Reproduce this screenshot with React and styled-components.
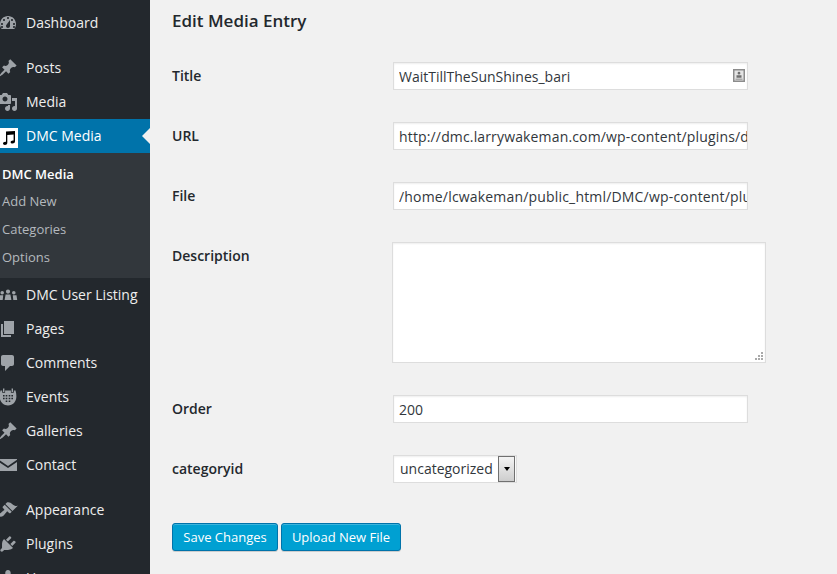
import React from 'react';
import styled, { createGlobalStyle } from 'styled-components';

const GlobalStyle = createGlobalStyle`
    html, body {
        margin: 0;
        padding: 0;
        height: 100%;
        overflow: hidden;
        background: #f1f1f1;
        font-family: "Open Sans", "Liberation Sans", sans-serif;
    }
`;

const ICONS = {
    dashboard: 'M3.76 16h12.48c1.1-1.37 1.76-3.11 1.76-5 0-4.42-3.58-8-8-8s-8 3.58-8 8c0 1.89.66 3.63 1.76 5zM10 4c.55 0 1 .45 1 1s-.45 1-1 1-1-.45-1-1 .45-1 1-1zM6 6c.55 0 1 .45 1 1s-.45 1-1 1-1-.45-1-1 .45-1 1-1zm8 0c.55 0 1 .45 1 1s-.45 1-1 1-1-.45-1-1 .45-1 1-1zm-5.37 5.55L12 7v6c0 1.1-.9 2-2 2s-2-.9-2-2c0-.57.24-1.08.63-1.45zM4 10c.55 0 1 .45 1 1s-.45 1-1 1-1-.45-1-1 .45-1 1-1zm12 0c.55 0 1 .45 1 1s-.45 1-1 1-1-.45-1-1 .45-1 1-1zm-12 3c.55 0 1 .45 1 1s-.45 1-1 1-1-.45-1-1 .45-1 1-1zm12 0c.55 0 1 .45 1 1s-.45 1-1 1-1-.45-1-1 .45-1 1-1z',
    pin: 'M10.44 3.02l1.82-1.82 6.36 6.35-1.83 1.82c-1.05-.68-2.48-.57-3.41.36l-.75.75c-.92.93-1.04 2.35-.35 3.41l-1.83 1.82-2.41-2.41-2.8 2.79c-.42.42-3.38 2.71-3.8 2.29s1.86-3.39 2.28-3.81l2.79-2.79L4.1 9.36l1.83-1.82c1.05.69 2.48.57 3.4-.36l.75-.75c.93-.92 1.05-2.35.36-3.41z',
    media: 'M13 11V4c0-.55-.45-1-1-1h-1.67L9 1H5L3.67 3H2c-.55 0-1 .45-1 1v7c0 .55.45 1 1 1h10c.55 0 1-.45 1-1zM7 4.5c1.38 0 2.5 1.12 2.5 2.5S8.38 9.5 7 9.5 4.5 8.38 4.5 7 5.62 4.5 7 4.5zM14 6h5v10.5c0 1.38-1.12 2.5-2.5 2.5S14 17.88 14 16.5s1.12-2.5 2.5-2.5c.17 0 .34.02.5.05V9h-3V6zm-4 8.05V13h2v3.5c0 1.38-1.12 2.5-2.5 2.5S7 17.88 7 16.5 8.12 14 9.5 14c.17 0 .34.02.5.05z',
    group: 'M10 4.5a2.1 2.1 0 1 1 0 4.2 2.1 2.1 0 0 1 0-4.2zM4.2 6a1.8 1.8 0 1 1 0 3.6 1.8 1.8 0 0 1 0-3.6zm11.6 0a1.8 1.8 0 1 1 0 3.6 1.8 1.8 0 0 1 0-3.6zM7.6 9.4h4.8l1 5.6H6.6l1-5.6zM1.5 10.2h3.7L4.7 15H.8l.7-4.8zm13.3 0h3.7l.7 4.8h-3.9l-.5-4.8z',
    pages: 'M6 15V2h10v13H6zm-1 1h8v2H3V5h2v11z',
    comments: 'M5 2h9c1.1 0 2 .9 2 2v7c0 1.1-.9 2-2 2h-2l-5 5v-5H5c-1.1 0-2-.9-2-2V4c0-1.1.9-2 2-2z',
    events: 'M5 1.5h1.4V5H5V1.5zm8.6 0H15V5h-1.4V1.5zM2.5 3.5h1.7v2.3h2.9V3.5h5.8v2.3h2.9V3.5h1.7c.6 2 .9 4 .9 6 0 5-3.5 9-8.4 9s-8.4-4-8.4-9c0-2 .3-4 .9-6zM5 8v1.6h1.6V8H5zm2.7 0v1.6h1.6V8H7.7zm3 0v1.6h1.6V8h-1.6zm2.7 0v1.6H15V8h-1.6zM5 10.7v1.6h1.6v-1.6H5zm2.7 0v1.6h1.6v-1.6H7.7zm3 0v1.6h1.6v-1.6h-1.6zm2.7 0v1.6H15v-1.6h-1.6zM7.7 13.4V15h1.6v-1.6H7.7zm3 0V15h1.6v-1.6h-1.6z',
    contact: 'M1 4h18v.8L10 11 1 4.8V4zm0 3l9 6 9-6v9H1V7z',
    appearance: 'M14.48 11.06L7.41 3.99l1.5-1.5c.5-.56 2.3-.47 3.51.32 1.21.8 1.43 1.28 2.91 2.1 1.18.64 2.45 1.26 4.45.85zm-.71.71L6.7 4.7 4.93 6.47c-.39.39-.39 1.02 0 1.41l1.06 1.06c.39.39.39 1.03 0 1.42-.6.6-1.43 1.11-2.21 1.69-.35.26-.7.53-1.01.84C1.43 13.23.4 14.89 1.7 16.2c1.3 1.3 3.1.2 4.4-1.1.3-.3.6-.7.8-1 .6-.8 1.1-1.6 1.7-2.2.39-.39 1.03-.39 1.42 0l1.06 1.06c.39.39 1.02.39 1.41 0z',
    plugins: 'M13.11 4.36L9.87 7.6 8 5.73l3.24-3.24c.35-.34 1.05-.2 1.56.32.52.51.66 1.21.31 1.55zm-8 1.77l.91-1.12 9.01 9.01-1.19.84c-.71.71-2.63 1.16-3.82 1.16H6.14L4.9 17.26c-.59.59-1.54.59-2.12 0-.59-.58-.59-1.53 0-2.12l1.24-1.24v-3.88c0-1.13.4-3.19 1.09-3.89zm7.26 3.97l3.24-3.24c.34-.35 1.04-.21 1.55.31.52.51.66 1.21.31 1.55l-3.24 3.25z',
    users: 'M10 9.25c-2.27 0-2.73-3.44-2.73-3.44C7 4.02 7.82 2 9.97 2c2.16 0 2.98 2.02 2.71 3.81 0 0-.41 3.44-2.68 3.44zm0 2.57L12.72 10c2.39 0 4.52 2.33 4.52 4.53v2.49s-3.65 1.13-7.24 1.13c-3.65 0-7.24-1.13-7.24-1.13v-2.49c0-2.25 1.94-4.48 4.47-4.48z',
};

const MENU_TOP = [
    { label: 'Dashboard', icon: 'dashboard' },
    { label: 'Posts', icon: 'pin', spaced: true },
    { label: 'Media', icon: 'media' },
];

const SUBMENU = ['DMC Media', 'Add New', 'Categories', 'Options'];

const MENU_BOTTOM = [
    { label: 'DMC User Listing', icon: 'group' },
    { label: 'Pages', icon: 'pages' },
    { label: 'Comments', icon: 'comments' },
    { label: 'Events', icon: 'events' },
    { label: 'Galleries', icon: 'pin' },
    { label: 'Contact', icon: 'contact' },
    { label: 'Appearance', icon: 'appearance', spaced: true },
    { label: 'Plugins', icon: 'plugins' },
    { label: 'Users', icon: 'users' },
];

const FIELDS = [
    { label: 'Title', value: 'WaitTillTheSunShines_bari', contact: true },
    { label: 'URL', value: 'http://dmc.larrywakeman.com/wp-content/plugins/dmc-media/files/WaitTillTheSunShines_bari.mp3', tracking: '.15px' },
    { label: 'File', value: '/home/lcwakeman/public_html/DMC/wp-content/plugins/dmc-media/files/WaitTillTheSunShines_bari.mp3', tracking: '.18px' },
];

const MenuIcon = ({ name }) => (
    <IconSvg viewBox="0 0 20 20" aria-hidden="true">
        <path d={ICONS[name]} />
    </IconSvg>
);

const MenuEntry = ({ item }) => (
    <MenuItem $spaced={item.spaced}>
        <MenuIcon name={item.icon} />
        {item.label}
    </MenuItem>
);

const App = () => (
    <Page>
        <GlobalStyle />
        <Sidebar>
            {MENU_TOP.map(item => <MenuEntry key={item.label} item={item} />)}
            <ActiveItem>
                <NoteBox>
                    <svg width="12" height="14" viewBox="0 0 12 14" aria-hidden="true">
                        <path d="M3 .6L12 0v10.6c0 1.2-1.100 2-2.400 2-1.200 0-2-.5-2-1.400 0-1.100 1.100-1.800 2.300-1.800.3 0 .5 0 .7.1V3.400l-6.300.5v8.100c0 1.200-1.100 2-2.400 2-1.200 0-1.900-.5-1.900-1.400 0-1.100 1.100-1.800 2.300-1.800.3 0 .5 0 .7.1V.6z" fill="#000" />
                    </svg>
                </NoteBox>
                DMC Media
                <ActiveArrow />
            </ActiveItem>
            <SubMenu>
                {SUBMENU.map((label, i) => <SubItem key={label} $current={i === 0}>{label}</SubItem>)}
            </SubMenu>
            {MENU_BOTTOM.map(item => <MenuEntry key={item.label} item={item} />)}
        </Sidebar>
        <Content>
            <Heading>Edit Media Entry</Heading>
            <Form>
                {FIELDS.map(field => (
                    <Row key={field.label}>
                        <Label>{field.label}</Label>
                        <InputWrap>
                            <TextInput readOnly value={field.value} $contact={field.contact} $tracking={field.tracking} />
                            {field.contact && (
                                <ContactBadge viewBox="0 0 12 13" aria-hidden="true">
                                    <path d="M0 0h12v13H0z" fill="#8c8c8c" />
                                    <path d="M1.500 1.500h9v10h-9z" fill="#e4e4e4" />
                                    <path d="M6 2.800a1.400 1.400 0 1 1 0 2.800 1.400 1.400 0 0 1 0-2.800zM3.500 6.300h5v2.500h-5zM2.500 9.800h7v.8h-7z" fill="#6e6e6e" />
                                </ContactBadge>
                            )}
                        </InputWrap>
                    </Row>
                ))}
                <Row>
                    <Label>Description</Label>
                    <DescriptionBox>
                        <Grip viewBox="0 0 10 10" aria-hidden="true">
                            <path d="M7 1h2v2H7zM4 4h2v2H4zM7 4h2v2H7zM1 7h2v2H1zM4 7h2v2H4zM7 7h2v2H7z" fill="#a9a9a9" />
                        </Grip>
                    </DescriptionBox>
                </Row>
                <Row>
                    <Label>Order</Label>
                    <InputWrap>
                        <TextInput readOnly value="200" />
                    </InputWrap>
                </Row>
                <Row>
                    <Label>categoryid</Label>
                    <SelectBox>
                        <SelectText>uncategorized</SelectText>
                        <SelectButton>
                            <SelectCaret />
                        </SelectButton>
                    </SelectBox>
                </Row>
                <Buttons>
                    <PrimaryButton type="button" $width="106px">Save Changes</PrimaryButton>
                    <PrimaryButton type="button" $width="120px">Upload New File</PrimaryButton>
                </Buttons>
            </Form>
        </Content>
    </Page>
);

const Page = styled.div`
    display: flex;
    width: 837px;
    height: 574px;
    overflow: hidden;
    background: #f1f1f1;
`;

const Sidebar = styled.nav`
    flex: 0 0 150px;
    height: 574px;
    padding-top: 6px;
    box-sizing: border-box;
    overflow: hidden;
    background: #23282d;
`;

const MenuItem = styled.div`
    display: flex;
    align-items: center;
    height: 34px;
    padding-bottom: 2px;
    box-sizing: border-box;
    margin-top: ${props => props.$spaced ? '11px' : '0'};
    color: #eee;
    font-size: 14px;
    white-space: nowrap;
`;

const IconSvg = styled.svg`
    flex: 0 0 20px;
    width: 20px;
    height: 20px;
    margin: 2px 8px 0 -2px;
    fill: #9ea3a8;
`;

const ActiveItem = styled(MenuItem)`
    position: relative;
    background: #0073aa;
    color: #fff;
`;

const NoteBox = styled.div`
    display: flex;
    align-items: center;
    justify-content: center;
    flex: 0 0 18px;
    height: 20px;
    margin: 6px 8px 0 0;
    background: #fff;
`;

const ActiveArrow = styled.span`
    position: absolute;
    right: 0;
    top: 9px;
    border-top: 8px solid transparent;
    border-bottom: 8px solid transparent;
    border-right: 8px solid #f1f1f1;
`;

const SubMenu = styled.div`
    display: flex;
    flex-direction: column;
    height: 125px;
    padding: 7px 0 0 2px;
    box-sizing: border-box;
    background: #32373c;
`;

const SubItem = styled.div`
    height: 28px;
    line-height: 28px;
    font-size: 13px;
    font-weight: ${props => props.$current ? 600 : 400};
    color: ${props => props.$current ? '#fff' : '#b4b9be'};

    &:first-child {
        height: 27px;
    }
`;

const Content = styled.main`
    flex: 1;
    min-width: 0;
    padding-left: 22px;
`;

const Heading = styled.h1`
    margin: 0;
    height: 62px;
    padding-top: 10px;
    box-sizing: border-box;
    line-height: 22px;
    font-size: 17px;
    font-weight: 600;
    color: #23282d;
`;

const Form = styled.form`
    display: flex;
    flex-direction: column;
    gap: 32px;
`;

const Row = styled.div`
    display: flex;
    align-items: flex-start;
`;

const Label = styled.label`
    flex: 0 0 221px;
    line-height: 28px;
    font-size: 14px;
    font-weight: 600;
    color: #23282d;
`;

const InputWrap = styled.div`
    position: relative;
    width: 355px;
    height: 28px;
`;

const TextInput = styled.input`
    display: block;
    width: 100%;
    height: 28px;
    padding: 0 ${props => props.$contact ? '24px' : '0'} 0 5px;
    box-sizing: border-box;
    border: 1px solid #ddd;
    box-shadow: inset 0 1px 2px rgba(0, 0, 0, .07);
    background: #fff;
    outline: none;
    font-family: inherit;
    font-size: 14px;
    letter-spacing: ${props => props.$tracking || 'normal'};
    color: #32373c;
`;

const ContactBadge = styled.svg`
    position: absolute;
    right: 3px;
    top: 7px;
    width: 12px;
    height: 13px;
`;

const DescriptionBox = styled.div`
    position: relative;
    width: 374px;
    height: 121px;
    margin-left: -1px;
    box-sizing: border-box;
    border: 1px solid #ddd;
    box-shadow: inset 0 1px 2px rgba(0, 0, 0, .07);
    background: #fff;
`;

const Grip = styled.svg`
    position: absolute;
    right: 1px;
    bottom: 1px;
    width: 10px;
    height: 10px;
`;

const SelectBox = styled.div`
    display: flex;
    align-items: center;
    width: 124px;
    height: 28px;
    padding: 0 1px 0 6px;
    box-sizing: border-box;
    border: 1px solid #ddd;
    box-shadow: inset 0 1px 2px rgba(0, 0, 0, .07);
    background: #fff;
`;

const SelectText = styled.span`
    flex: 1;
    padding-bottom: 2px;
    font-size: 14px;
    color: #32373c;
`;

const SelectButton = styled.span`
    display: flex;
    align-items: center;
    justify-content: center;
    flex: 0 0 17px;
    height: 26px;
    box-sizing: border-box;
    border: 1px solid #707070;
    background: linear-gradient(#f4f4f4, #cdcdcd);
`;

const SelectCaret = styled.span`
    border-top: 4px solid #000;
    border-left: 3.5px solid transparent;
    border-right: 3.5px solid transparent;
`;

const Buttons = styled.div`
    display: flex;
    gap: 3px;
    margin-top: 8px;
`;

const PrimaryButton = styled.button`
    width: ${props => props.$width};
    height: 28px;
    padding: 0;
    border: 1px solid #0073aa;
    border-radius: 3px;
    box-shadow: inset 0 1px 0 rgba(120, 200, 230, .5), 0 1px 0 rgba(0, 0, 0, .15);
    background: #00a0d2;
    font-family: inherit;
    font-size: 13px;
    line-height: 26px;
    color: #fff;
`;

export default App;
